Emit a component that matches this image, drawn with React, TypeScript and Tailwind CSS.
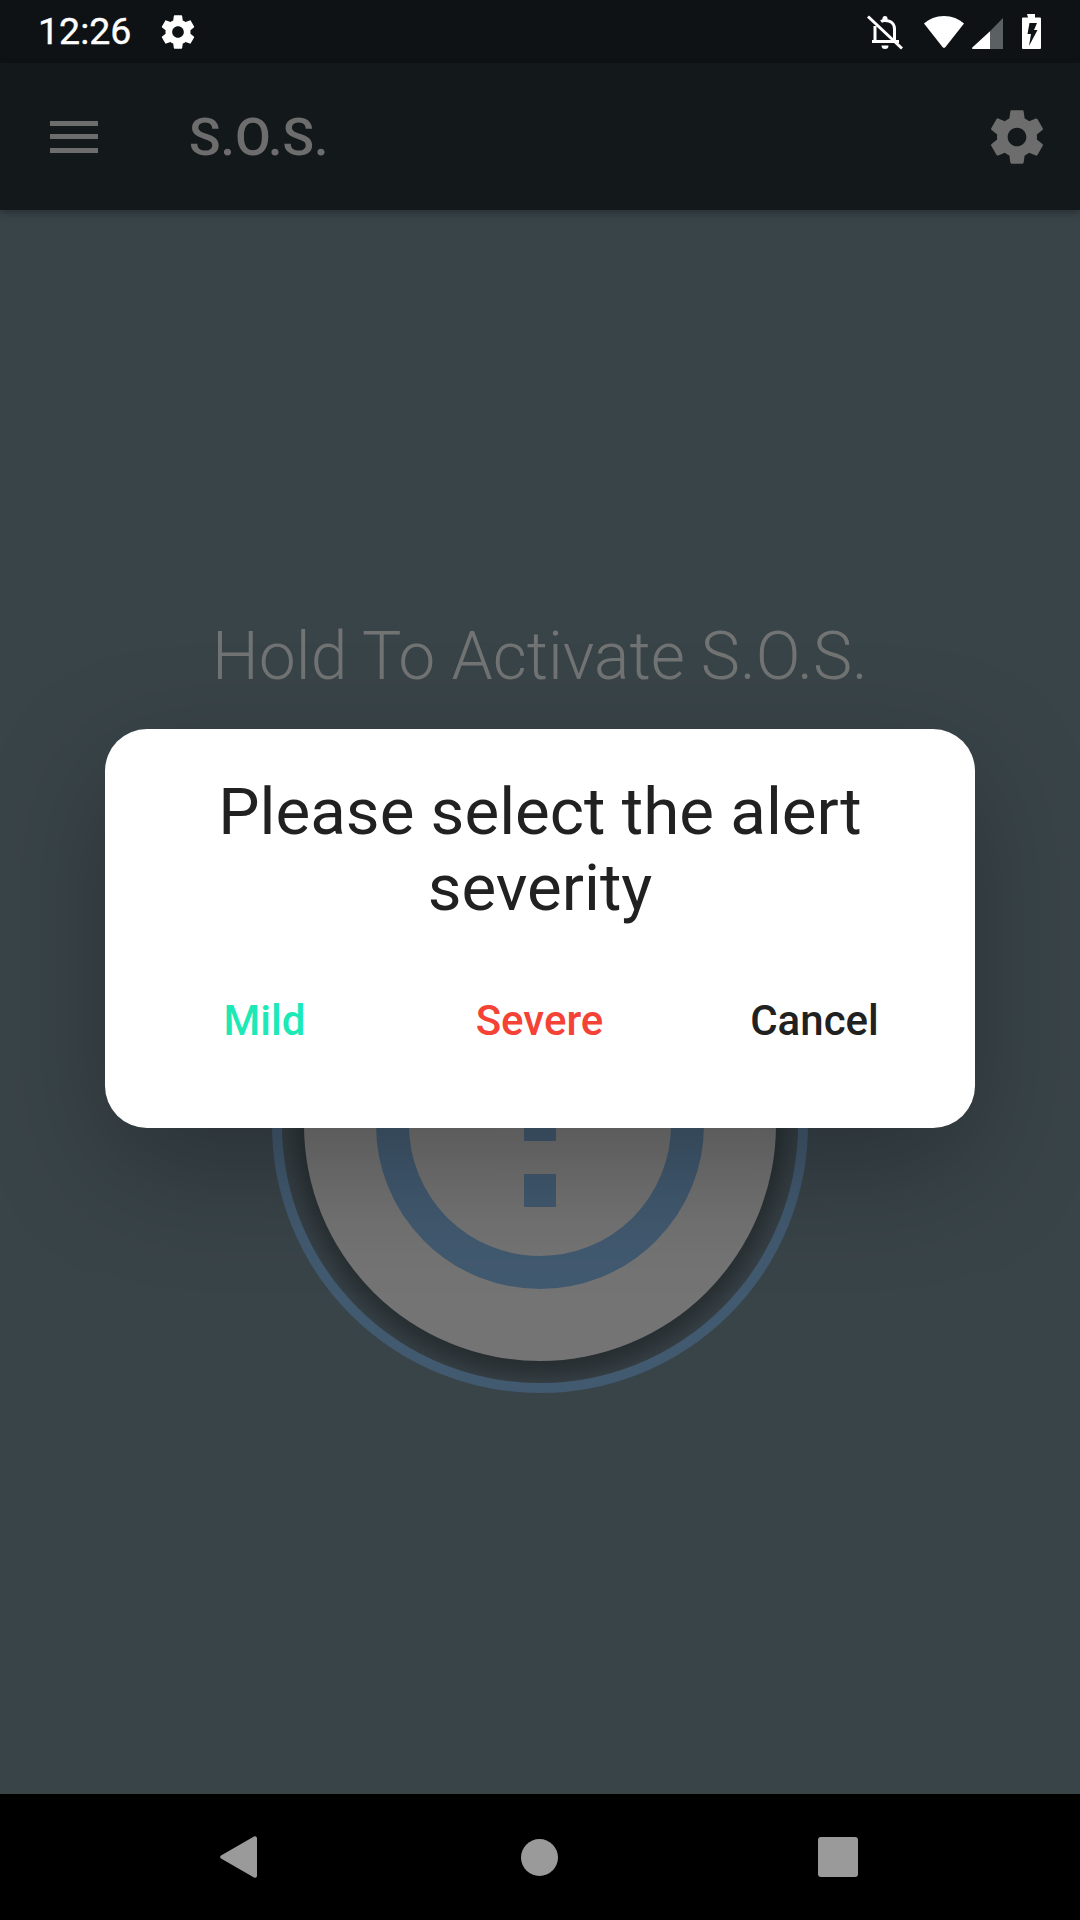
const GEAR = "M19.43 12.98c.04-.32.07-.64.07-.98s-.03-.66-.07-.98l2.11-1.65c.19-.15.24-.42.12-.64l-2-3.46c-.12-.22-.39-.3-.61-.22l-2.49 1c-.52-.4-1.08-.73-1.69-.98l-.38-2.65C14.46 2.18 14.25 2 14 2h-4c-.25 0-.46.18-.49.42l-.38 2.65c-.61.25-1.17.59-1.69.98l-2.49-1c-.23-.09-.49 0-.61.22l-2 3.46c-.13.22-.07.49.12.64l2.11 1.65c-.04.32-.07.65-.07.98s.03.66.07.98l-2.11 1.65c-.19.15-.24.42-.12.64l2 3.46c.12.22.39.3.61.22l2.49-1c.52.4 1.08.73 1.69.98l.38 2.65c.03.24.24.42.49.42h4c.25 0 .46-.18.49-.42l.38-2.65c.61-.25 1.17-.59 1.69-.98l2.49 1c.23.09.49 0 .61-.22l2-3.46c.12-.22.07-.49-.12-.64l-2.11-1.65zM12 15.5c-1.93 0-3.5-1.57-3.5-3.5s1.57-3.5 3.5-3.5 3.5 1.57 3.5 3.5-1.57 3.5-3.5 3.5z";

function Gear({ className }: { className: string }) {
  return (
    <svg viewBox="0 0 24 24" className={className} fill="currentColor">
      <path d={GEAR} />
    </svg>
  );
}

export default function App() {
  return (
    <div className="relative flex h-[1920px] w-[1080px] flex-col overflow-hidden bg-[#394449] font-['Roboto',sans-serif]">
      {/* status bar */}
      <div className="flex h-[63px] shrink-0 items-center bg-[#0e1215] text-white">
        <span className="ml-[38px] w-[97px] text-[37.5px] leading-none [-webkit-text-stroke:0.4px_white]">12:26</span>
        <Gear className="ml-[23px] h-[40px] w-[40px]" />
        <svg viewBox="0 0 40 40" className="ml-[667px] h-[40px] w-[40px]" fill="none" stroke="white">
          <path d="M7 29.500h27M10 29V14M29.500 29V17c0-5-3.500-8.500-9.500-8.500-1.500 0-3 .3-4 1" strokeWidth="3" />
          <circle cx="20" cy="6.500" r="2.500" fill="white" stroke="none" />
          <path d="M16.500 33.500h7a3.500 3.500 0 0 1-7 0z" fill="white" stroke="none" />
          <path d="M3 4.500l34 32" strokeWidth="3" />
        </svg>
        <svg viewBox="0 0 40 32" className="ml-[19px] h-[32px] w-[40px]">
          <path d="M0 7.500C5 3 12 0 20 0s15 3 20 7.500L21.500 31a2 2 0 0 1-3 0z" fill="white" />
        </svg>
        <svg viewBox="0 0 31 31" className="ml-[8px] mt-[3px] h-[31px] w-[31px]">
          <path d="M18 13.200L31 0v31H18z" fill="#5b6162" />
          <path d="M18 13.200V31H1a1 1 0 0 1-.7-1.600z" fill="white" />
        </svg>
        <svg viewBox="0 0 19 35" className="ml-[19px] h-[35px] w-[19px]">
          <path
            fillRule="evenodd"
            d="M5 0h8v3.500h5a1 1 0 0 1 1 1V34a1 1 0 0 1-1 1H1a1 1 0 0 1-1-1V4.500a1 1 0 0 1 1-1h5zM7.500 9L5.500 20h3.500l-2 12L15.500 16h-3.500L15 9z"
            fill="white"
          />
        </svg>
      </div>

      {/* app bar */}
      <header className="relative z-10 flex h-[147px] shrink-0 items-center bg-[#13181b] text-[#6d6d6d] shadow-[0_3px_8px_rgba(0,0,0,0.3)]">
        <div className="ml-[50px] flex h-[32px] w-[48px] flex-col justify-between">
          <div className="h-[5px] bg-[#6d6d6d]" />
          <div className="h-[5px] bg-[#6d6d6d]" />
          <div className="h-[5px] bg-[#6d6d6d]" />
        </div>
        <h1 className="ml-[91px] mt-[3px] text-[52px] font-medium leading-none">S.O.S.</h1>
        <Gear className="ml-auto mr-[31px] h-[64px] w-[64px]" />
      </header>

      {/* main */}
      <main className="flex flex-1 flex-col items-center">
        <p className="mt-[407px] text-[66px] font-light leading-[80px] text-[#727474]">Hold To Activate S.O.S.</p>
        <div className="relative mt-[160px] flex h-[536px] w-[536px] items-center justify-center overflow-hidden rounded-full border-[10px] border-[#425a70] bg-[#3a444a]">
          <div className="flex h-[472px] w-[472px] items-center justify-center rounded-full bg-[#747474] shadow-[0_10px_24px_6px_#262d30]">
            <div className="flex h-[328px] w-[328px] flex-col items-center rounded-full border-[33px] border-[#425a70]">
              <div className="mt-[42px] h-[105px] w-[32px] bg-[#425a70]" />
              <div className="mt-[33px] h-[33px] w-[32px] bg-[#425a70]" />
            </div>
          </div>
        </div>
      </main>

      {/* nav bar */}
      <nav className="relative flex h-[126px] shrink-0 items-center bg-black">
        <svg viewBox="0 0 37 42" className="ml-[220px] h-[42px] w-[37px]">
          <path d="M1 19.500L34 .5a2 2 0 0 1 3 1.500v38a2 2 0 0 1-3 1.500L1 22.500a2 2 0 0 1 0-3z" fill="#9a9a9a" />
        </svg>
        <div className="ml-[264px] h-[37px] w-[37px] rounded-full bg-[#9a9a9a]" />
        <div className="ml-[260px] h-[40px] w-[40px] rounded-[3px] bg-[#9a9a9a]" />
      </nav>

      {/* dialog */}
      <div className="absolute left-[105px] top-[729px] flex h-[399px] w-[870px] flex-col rounded-[42px] bg-white shadow-[0_40px_120px_rgba(0,0,0,0.27)]">
        <h2 className="mt-[45px] px-[80px] text-center text-[65.500px] leading-[76px] text-[#212121]">Please select the alert severity</h2>
        <div className="mt-[71px] grid grid-cols-3 pl-[22px] pr-[23px] text-center text-[42px] font-medium leading-[48px]">
          <span className="text-[#1de9b6]">Mild</span>
          <span className="text-[#f44336]">Severe</span>
          <span className="text-[#212121]">Cancel</span>
        </div>
      </div>
    </div>
  );
}
